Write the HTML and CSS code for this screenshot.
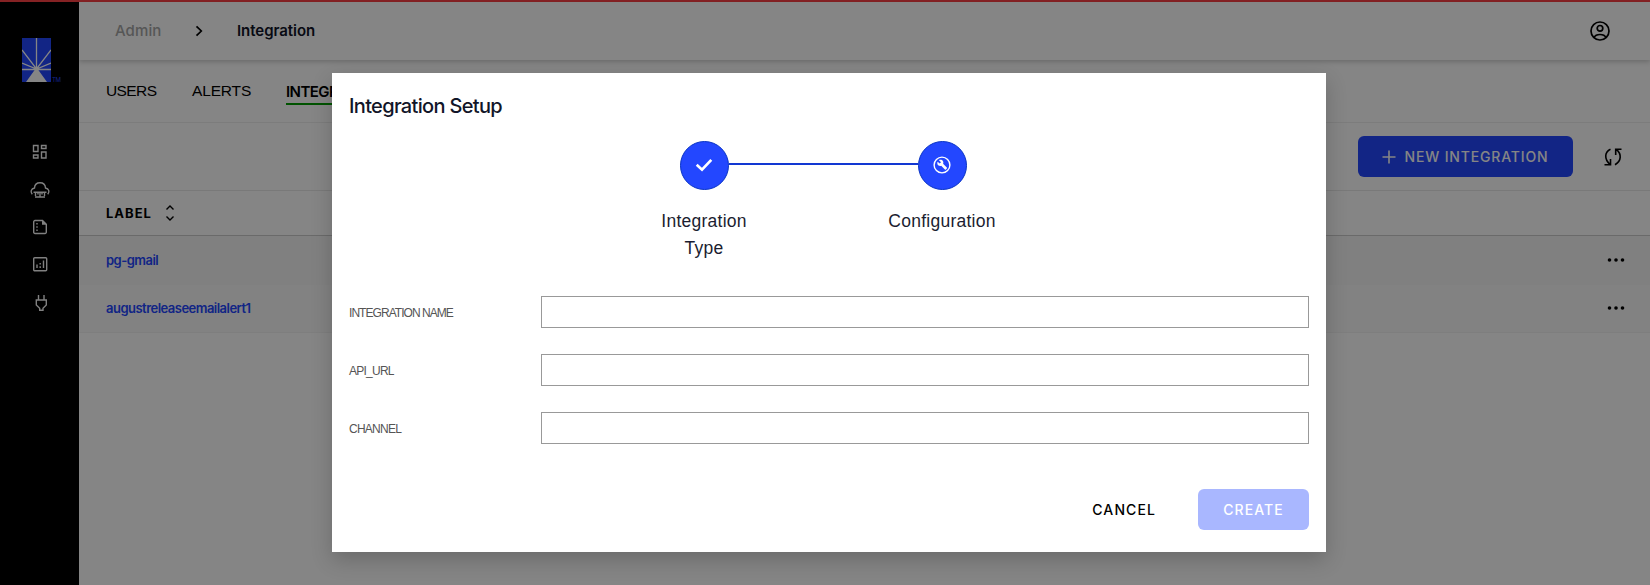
FILE: index.html
```html
<!DOCTYPE html>
<html lang="en">
<head>
<meta charset="utf-8">
<title>Integration Setup</title>
<link rel="stylesheet" href="styles.css">
</head>
<body>
<div class="app">
  <aside class="sidebar">
    <div class="brand">
      <svg class="logo" width="29" height="44" viewBox="0 0 29 44"><path fill="#2347ff" d="M0 0h29v44H0z"/><path stroke="#fff" stroke-width="1.3" fill="none" d="M14.5 0v31M0 12l14.500 19L29 12M0 25l14.500 6L29 25M0 31.500h29"/><path fill="#fff" d="M4 44 13 31.500 12.500 29h4l-.5 2.500L25 44z"/></svg>
      <span class="tm">TM</span>
    </div>
    <nav class="side-nav">
      <svg width="16" height="16" viewBox="0 0 16 16"><path d="M1.500 1.500h4.500v6H1.500zM9.500 1.500H14v3H9.500zM9.500 8H14v6H9.500zM1.500 11H6v3H1.500z"/></svg>
      <svg width="20" height="18" viewBox="0 0 20 18"><path d="M2.300 13.200C.3 10.800 1 7.500 4.500 7 4.700 3.800 7 1.700 10 1.700S15.300 3.800 15.500 7c3.500.5 4.200 3.800 2.200 6.200M3.500 11.200h13M5.500 11.200V15M10 11.200V16M14.500 11.200V15M5 16h10M8 11.500v2M12 11.500v2"/></svg>
      <svg width="16" height="16" viewBox="0 0 16 16"><path d="M10.500 1.500H3A1.300 1.300 0 0 0 1.700 2.800v10.400A1.300 1.300 0 0 0 3 14.500h10a1.300 1.300 0 0 0 1.300-1.300V5.300z"/><path class="solid" d="M10 1.200v4.600h4.600z"/><path d="M4.300 4.700h1.400M4.300 8h1.400M4.300 11.300h1.400"/></svg>
      <svg width="16" height="16" viewBox="0 0 16 16"><rect x="1.700" y="1.700" width="13" height="13" rx="1"/><path d="M5 8.500V12M8.200 10.200V12M8.200 7v1.400M11.500 4.500V12"/></svg>
      <svg class="plug" width="16" height="18" viewBox="0 0 16 18"><path d="M5.500 1v5M11 1v5M3.300 6h10v5l-3.300 3.300v2H6.700v-2L3.300 11z"/></svg>
    </nav>
  </aside>
  <main class="main">
    <header class="topbar">
      <span class="crumb">Admin</span>
      <svg class="crumb-sep" width="8" height="12" viewBox="0 0 8 12"><path d="M1.500 1.300 6.300 6 1.500 10.700"/></svg>
      <span class="crumb-current">Integration</span>
      <svg class="user" width="22" height="22" viewBox="0 0 22 22"><circle cx="11" cy="11" r="9"/><circle cx="11" cy="8.300" r="2.800"/><path d="M5 17.500c2-4 10-4 12 0"/></svg>
    </header>
    <nav class="tabs">
      <span class="tab tab-users">USERS</span>
      <span class="tab tab-alerts">ALERTS</span>
      <span class="tab active">INTEGRATION</span>
    </nav>
    <div class="toolbar">
      <button class="btn btn-new"><svg width="14" height="14" viewBox="0 0 14 14"><path d="M7 .5v13M.5 7h13"/></svg><span class="new-text">NEW INTEGRATION</span></button>
      <svg class="refresh" width="20" height="20" viewBox="0 0 20 20"><path d="M7.500 2.200C1.500 5 1 12 7 17.500M1.500 17.700H7.500V12M12 17.700C18.500 14 19 7 13 2.200M18.500 2.200H12.700V8"/></svg>
    </div>
    <div class="row thead">
      <span class="label">LABEL</span>
      <svg class="sort" width="10" height="18" viewBox="0 0 10 18"><path d="M1.500 5.500 5 2l3.500 3.500M1.500 12.500 5 16l3.500-3.500"/></svg>
    </div>
    <div class="row first"><a class="link link-one">pg-gmail</a><svg class="more" width="18" height="4" viewBox="0 0 18 4"><circle cx="2.500" cy="2" r="1.800"/><circle cx="9" cy="2" r="1.800"/><circle cx="15.500" cy="2" r="1.800"/></svg></div>
    <div class="row second"><a class="link link-two">augustreleaseemailalert1</a><svg class="more" width="18" height="4" viewBox="0 0 18 4"><circle cx="2.500" cy="2" r="1.800"/><circle cx="9" cy="2" r="1.800"/><circle cx="15.500" cy="2" r="1.800"/></svg></div>
  </main>
</div>
<div class="overlay">
  <section class="modal">
    <h1 class="title">Integration Setup</h1>
    <div class="stepper">
      <div class="step">
        <div class="dot"><svg width="18" height="14" viewBox="0 0 18 14"><path class="check" d="M1.700 6.800 7 11.700 16.300 1.800"/></svg></div>
        <span class="step-text step-type">Integration<br>Type</span>
      </div>
      <div class="line"></div>
      <div class="step">
        <div class="dot"><svg width="18" height="18" viewBox="0 0 18 18"><circle class="ring" cx="9" cy="9" r="7.900"/><path class="wrench" d="M4.600 5.700 6.700 7.600 8 6.300 6 4.200C7.500 3.500 9.300 3.900 10 5.300c.5.900.4 1.700.1 2.500l3.700 3.700c.3.300.3.700 0 1l-.9.900c-.3.300-.7.300-1 0L8.200 9.700C5.700 10.600 3.500 8.300 4.600 5.700z"/></svg></div>
        <span class="step-text step-config">Configuration</span>
      </div>
    </div>
    <form class="form">
      <label class="field"><span class="name name-long">INTEGRATION NAME</span><input class="input"></label>
      <label class="field"><span class="name">API_URL</span><input class="input"></label>
      <label class="field"><span class="name">CHANNEL</span><input class="input"></label>
    </form>
    <footer class="actions"><button class="btn btn-cancel">CANCEL</button><button class="btn btn-create">CREATE</button></footer>
  </section>
</div>
</body>
</html>
```
FILE: styles.css
```css
* { box-sizing: border-box; }
body { margin: 0; width: 1650px; height: 585px; overflow: hidden; font-family: Inter, "Liberation Sans", sans-serif; color: #000; }
svg { flex: none; fill: none; }
.app { display: flex; height: 585px; border-top: 2px solid #ff4145; background: #fff; }
.sidebar { width: 79px; background: #000; flex: none; }
.brand { display: flex; align-items: flex-end; margin: 36px 0 0 22px; height: 44px; }
.tm { font-size: 6px; line-height: 5px; color: #2347ff; margin-left: 1px; letter-spacing: -.4px; }
.side-nav { display: flex; flex-direction: column; align-items: center; padding-top: 62px; gap: 20.500px; }
.side-nav svg { stroke: #f5f5f5; stroke-width: 1.4; }
.side-nav .solid { fill: #f5f5f5; stroke: none; }
.side-nav .plug { margin: 2px 0 0 3px; }
.main { flex: 1; display: flex; flex-direction: column; }
.topbar { height: 58px; flex: none; display: flex; align-items: center; padding: 0 39px 1px 36px; box-shadow: 0 2px 5px rgba(0,0,0,.2); font-size: 15px; font-weight: 500; }
.crumb { width: 80px; color: #a6a6a6; letter-spacing: .1px; }
.crumb-sep { stroke: #000; stroke-width: 1.7; margin-right: 34px; }
.crumb-current { color: #111528; font-weight: 600; letter-spacing: -.05px; }
.user { margin-left: auto; stroke: #000; stroke-width: 1.7; }
.tabs { height: 63px; flex: none; display: flex; padding: 20px 0 0 27px; border-bottom: 1px solid #eee; font-family: "Liberation Sans", sans-serif; font-size: 15.500px; }
.tab { height: 25px; line-height: 22px; }
.tab-users { width: 85px; letter-spacing: -.6px; }
.tab-alerts { width: 95px; padding-left: 1px; letter-spacing: -.15px; }
.active { font-family: Inter, sans-serif; font-size: 15px; line-height: 24px; font-weight: 600; letter-spacing: -.55px; border-bottom: 2px solid #00a000; }
.toolbar { height: 68px; flex: none; display: flex; align-items: center; justify-content: flex-end; padding-right: 27px; gap: 30px; border-bottom: 1px solid #e8e8e8; }
.btn { border: 0; border-radius: 6px; font-family: inherit; font-size: 14px; font-weight: 500; padding: 0; height: 41px; letter-spacing: 1.1px; display: flex; align-items: center; justify-content: center; }
.btn-new { width: 215px; gap: 8px; background: #2347ff; color: #fff; letter-spacing: .85px; }
.btn-new svg { stroke: #fff; stroke-width: 1.6; }
.refresh { stroke: #000; stroke-width: 1.6; }
.row { display: flex; align-items: center; padding: 0 25px 0 27px; flex: none; }
.thead { height: 45px; border-bottom: 1px solid #ccc; font-size: 13px; font-weight: 700; }
.label { letter-spacing: 1px; }
.sort { margin-left: 13px; stroke: #000; stroke-width: 1.4; }
.first { height: 49px; background: #f5f5f5; padding-bottom: 2px; }
.second { height: 48px; background: #f9f9f9; border-bottom: 1px solid #f2f2f2; padding-bottom: 1px; }
.link { color: #2347ff; font-size: 13px; font-weight: 600; letter-spacing: -.52px; }
.more { margin-left: auto; fill: #000; }
.overlay { position: absolute; inset: 0; background: rgba(0,0,0,.48); padding: 73px 0 0 332px; }
.modal { width: 994px; height: 479px; background: #fff; box-shadow: 0 8px 20px rgba(0,0,0,.2); display: flex; flex-direction: column; padding: 19px 17px 0; }
.title { margin: 0; font-size: 20px; line-height: 28px; font-weight: 500; color: #111528; letter-spacing: -.67px; }
.stepper { display: flex; justify-content: center; margin-top: 20.500px; height: 155.500px; padding-right: 12px; }
.step { width: 49px; display: flex; flex-direction: column; align-items: center; }
.dot { flex: none; width: 49px; height: 49px; border-radius: 50%; background: #2347ff; border: 1px solid #0833c5; display: flex; align-items: center; justify-content: center; }
.check { stroke: #fff; stroke-width: 2.7; }
.ring { stroke: #fff; stroke-width: 1.4; }
.wrench { fill: #fff; }
.line { width: 189px; height: 2px; margin-top: 22.500px; background: #1238d2; }
.step-text { margin-top: 18px; font-family: "Liberation Sans", sans-serif; font-size: 17.500px; line-height: 27px; color: #1b1d30; text-align: center; white-space: nowrap; letter-spacing: .25px; }
.form { display: flex; flex-direction: column; gap: 26px; }
.field { display: flex; align-items: center; height: 32px; }
.name { width: 192px; flex: none; padding-top: 1px; font-family: "Liberation Sans", sans-serif; font-size: 12px; color: #555; letter-spacing: -.75px; }
.name-long { letter-spacing: -.95px; }
.input { flex: 1; height: 32px; border: 1px solid #999; border-radius: 0; background: #fff; outline: 0; }
.actions { margin-top: 45px; display: flex; justify-content: flex-end; gap: 42px; }
.btn-cancel { background: none; color: #000; }
.btn-create { width: 111px; background: #a9b7ff; color: #fff; }
```
